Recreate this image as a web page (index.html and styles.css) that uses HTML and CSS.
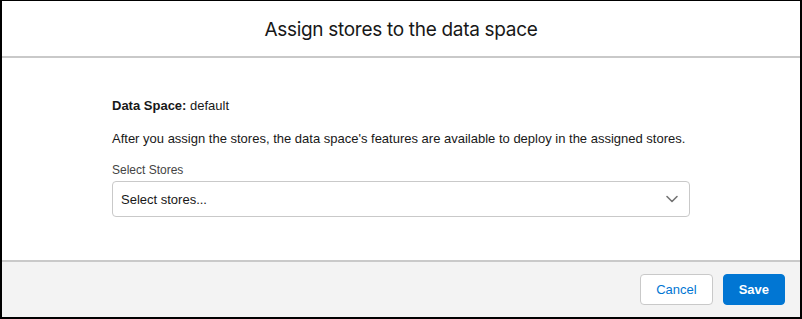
FILE: index.html
```html
<!DOCTYPE html>
<html lang="en">
<head>
    <meta charset="UTF-8">
    <title>Assign stores to the data space</title>
    <link rel="stylesheet" href="styles.css">
</head>
<body>
    <!-- Modal -->
    <div class="modal">
        <div class="modal-header">
            <h2>Assign stores to the data space</h2>
        </div>

        <div class="modal-body">
            <p class="space-name"><strong>Data Space:</strong> default</p>
            <p class="help-text">After you assign the stores, the data space's features are available to deploy in the assigned stores.</p>

            <label class="field-label" for="stores">Select Stores</label>
            <div class="select" id="stores">
                <span>Select stores...</span>
                <svg class="chevron" width="14" height="14" viewBox="0 0 14 14">
                    <path d="M2 4.5 L7 9.5 L12 4.5" fill="none" stroke="#747474" stroke-width="1.6" stroke-linecap="round" stroke-linejoin="round"/>
                </svg>
            </div>
        </div>

        <div class="modal-footer">
            <button class="btn btn-neutral">Cancel</button>
            <button class="btn btn-brand">Save</button>
        </div>
    </div>
</body>
</html>
```

FILE: styles.css
```css
* {
    margin: 0;
    padding: 0;
    box-sizing: border-box;
}
html, body {
    height: 100%;
}
body {
    font-family: "Liberation Sans", Arial, sans-serif;
    color: #181818;
    background: #fff;
}
.modal {
    height: 100%;
    border: solid #000;
    border-width: 1px 2px 2px 2px;
    display: flex;
    flex-direction: column;
}
/* Header */
.modal-header {
    height: 57px;
    border-bottom: 2px solid #c9c9c9;
    display: flex;
    align-items: center;
    justify-content: center;
}
.modal-header h2 {
    font-family: Inter, "Liberation Sans", sans-serif;
    font-size: 19px;
    font-weight: 400;
    letter-spacing: -0.3px;
    padding-top: 2px;
}
/* Body */
.modal-body {
    flex: 1;
    padding: 40px 110px 0 110px;
    font-size: 13px;
}
.space-name {
    margin-bottom: 18px;
}
.space-name strong {
    font-weight: 700;
}
.help-text {
    margin-bottom: 17px;
}
.field-label {
    display: block;
    font-size: 12px;
    color: #444;
    margin-bottom: 4px;
}
.select {
    height: 36px;
    border: 1px solid #c9c9c9;
    border-radius: 4px;
    display: flex;
    align-items: center;
    justify-content: space-between;
    padding: 0 10px 0 8px;
}
/* Footer */
.modal-footer {
    height: 57px;
    background: #f3f3f3;
    border-top: 2px solid #c9c9c9;
    display: flex;
    align-items: center;
    justify-content: flex-end;
    gap: 10px;
    padding: 0 15px 0 0;
}
.btn {
    height: 31px;
    padding: 0 15px;
    border-radius: 4px;
    font-family: inherit;
    font-size: 13px;
}
.btn-neutral {
    background: #fff;
    border: 1px solid #c9c9c9;
    color: #0176d3;
}
.btn-brand {
    background: #0176d3;
    border: 1px solid #0176d3;
    color: #fff;
    font-weight: 700;
}
```
